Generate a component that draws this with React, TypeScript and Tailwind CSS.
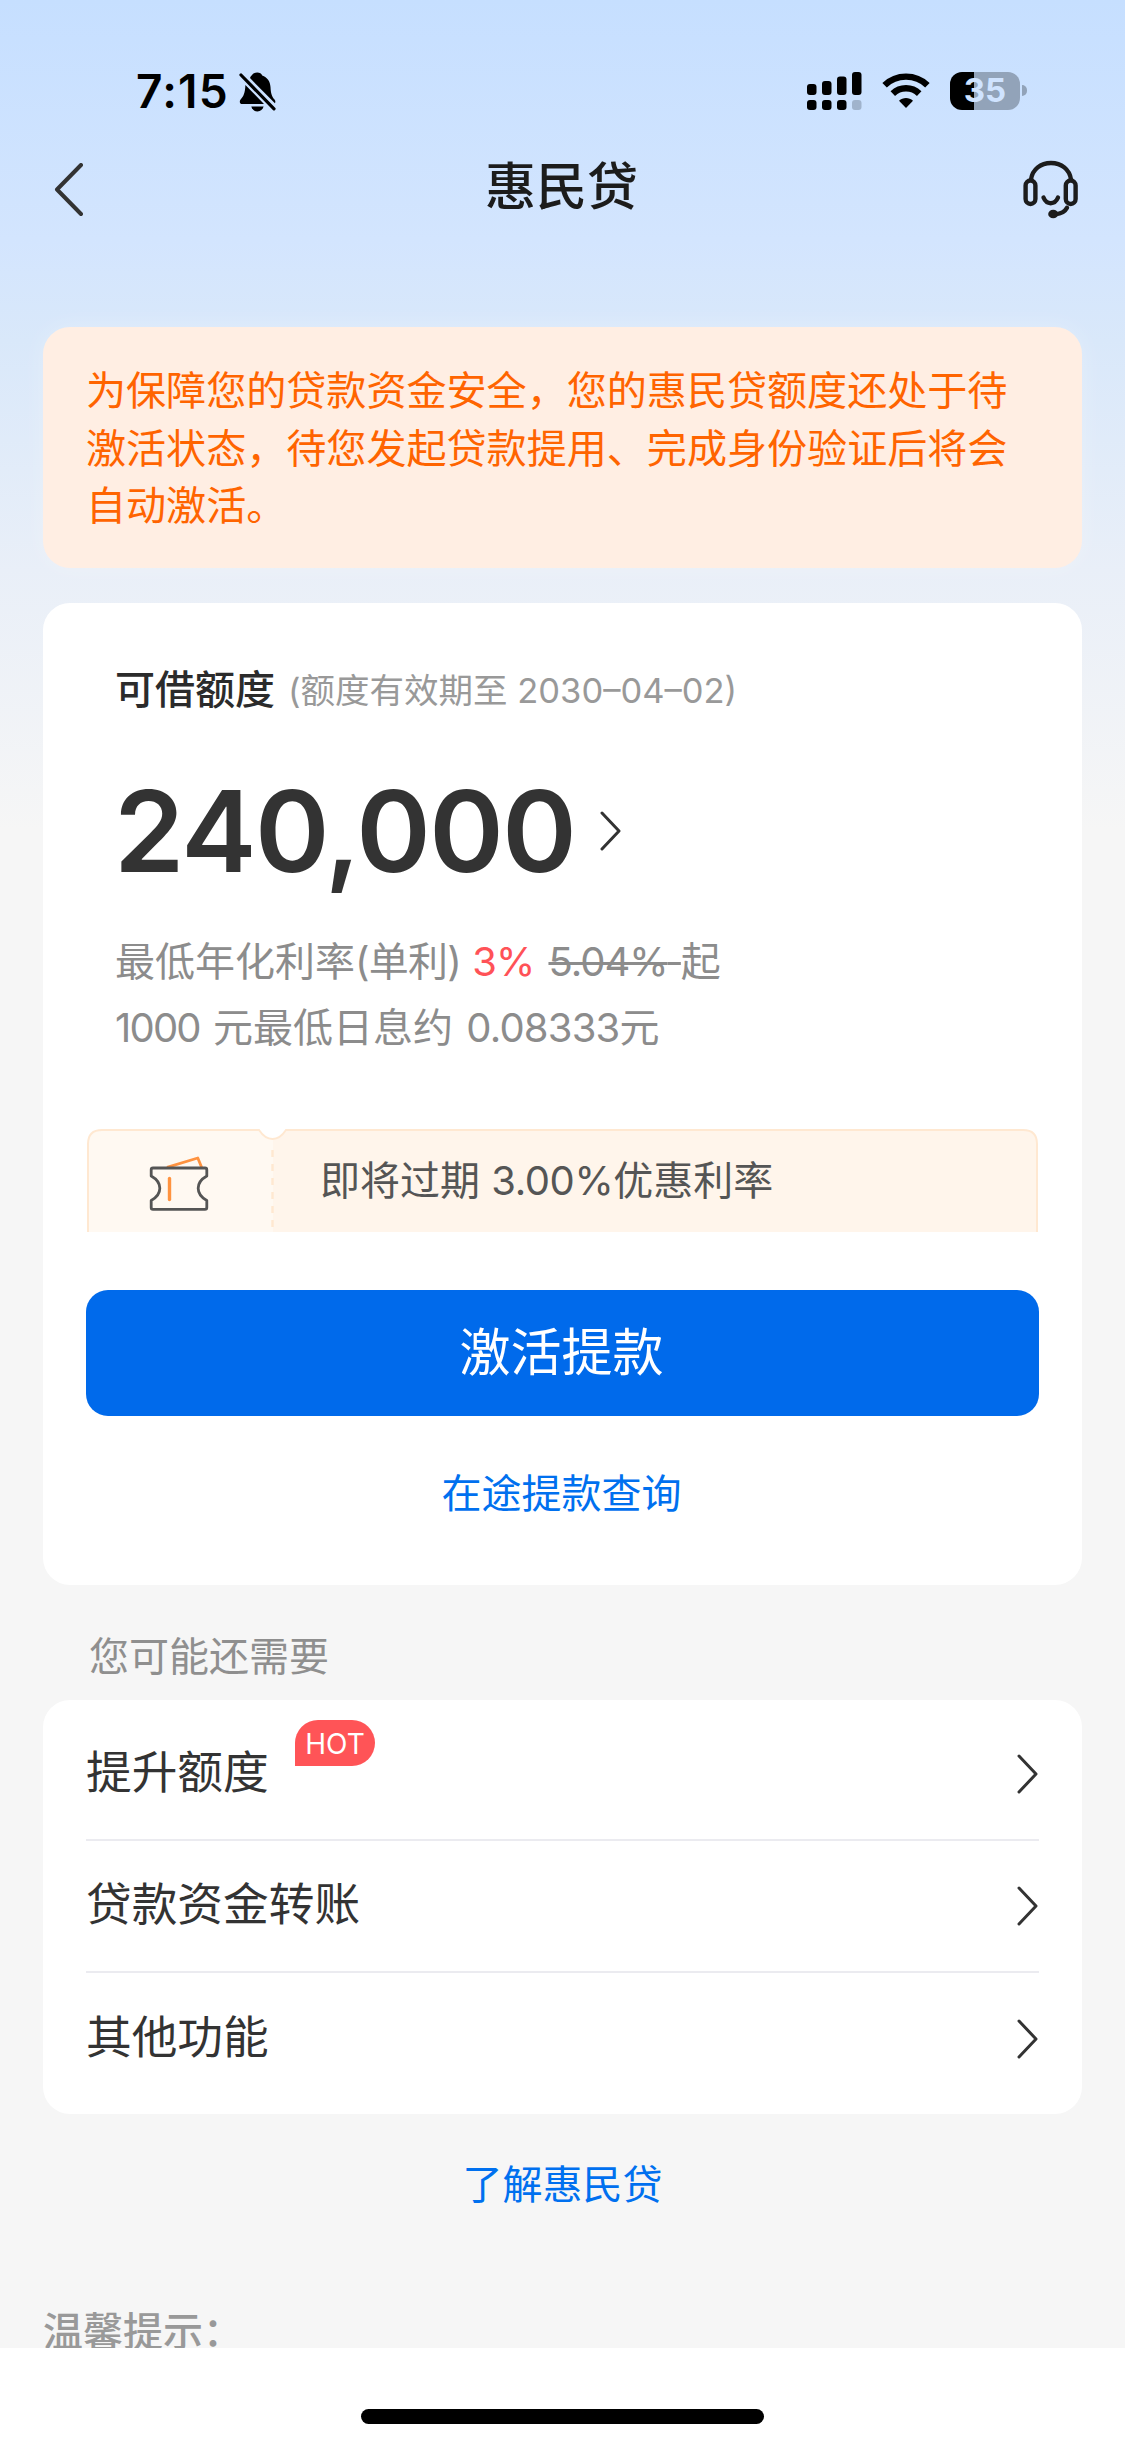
import { clsx } from 'clsx';

interface MenuItem {
  title: string;
  hot?: boolean;
}

const MENU: MenuItem[] = [
  { title: '提升额度', hot: true },
  { title: '贷款资金转账' },
  { title: '其他功能' }
];

const SIGNAL_BARS = [
  { x: 0, y: 12, h: 11 },
  { x: 15, y: 9, h: 14 },
  { x: 30, y: 4.5, h: 18.5 },
  { x: 45, y: 0, h: 23 }
];

function BellOffIcon() {
  return (
    <svg width="38" height="40" viewBox="0 0 38 40" className="block">
      <path
        d="M12.600 3.600C13.800 1.600 15.700.4 18.200.4s4.400 1.200 5 3.200c5 1.700 8 6 8.300 11.400.3 6.400 1.400 9.400 4 12.600.9 1.100 1.200 2.400.4 3.600L11 6.100c.4-1 .8-1.900 1.600-2.500z"
        fill="#000"
      />
      <path
        d="M6.400 13 25 32H3.400C.7 32 .1 29.400 1.600 27.600c2.900-3.300 4.500-6.600 4.800-14.600z"
        fill="#000"
      />
      <path d="M12.300 34.600h12.300c-.8 3-3 4.900-6.100 4.900s-5.400-1.900-6.200-4.900z" fill="#000" />
      <path d="M2 3 35 36.800" stroke="#000" strokeWidth="3.200" strokeLinecap="round" />
    </svg>
  );
}

function SignalIcon() {
  return (
    <svg width="55" height="38" viewBox="0 0 55 38" className="block">
      {SIGNAL_BARS.map((bar) => (
        <rect key={bar.x} x={bar.x} y={bar.y} width="9.500" height={bar.h} rx="3" fill="#000" />
      ))}
      {SIGNAL_BARS.map((bar, index) => (
        <rect
          key={bar.x}
          x={bar.x}
          y="28"
          width="9.500"
          height="10"
          rx="3"
          fill={index === 3 ? '#a0b3cc' : '#000'}
        />
      ))}
    </svg>
  );
}

function WifiIcon() {
  return (
    <svg width="48" height="36" viewBox="0 0 48 36" className="block">
      <g fill="none" stroke="#000" strokeWidth="6.400">
        <path d="M2.600 12.200C14.400.700 33.600.700 45.400 12.200" />
        <path d="M10.800 20.600c7.300-7.200 19.100-7.200 26.400 0" />
      </g>
      <path d="M24 35l-7-7.200c3.900-3.800 10.100-3.800 14 0z" fill="#000" />
    </svg>
  );
}

function HeadsetIcon() {
  return (
    <svg width="58" height="60" viewBox="0 0 58 60" className="block">
      <g fill="none" stroke="#1c1c1c" strokeWidth="4.400" strokeLinecap="round">
        <path d="M9 19.500C10.500 9.200 18.700 3 29 3s18.500 6.200 20 16.500" />
        <rect x="3.600" y="20.500" width="9.800" height="23.500" rx="4.900" />
        <rect x="43.800" y="20.500" width="9.800" height="23.500" rx="4.900" />
        <path d="M21.500 37.500c1.500 3.600 3.900 5.700 7.200 5.700s5.800-2.100 7.300-5.700" />
        <path d="M45 47.800c-2.200 4.200-6 6-11.500 6.500" />
      </g>
      <ellipse cx="31.200" cy="54" rx="5" ry="4.300" fill="#1c1c1c" />
    </svg>
  );
}

function TicketIcon() {
  return (
    <svg width="60" height="58" viewBox="0 0 60 58" className="block">
      <path d="M18 12.300 48.800 3l3.800 9.300" fill="none" stroke="#ff9340" strokeWidth="2.800" strokeLinejoin="round" />
      <path
        d="M4 13h52c1.200 0 1.800.6 1.800 1.800V21c-11.500 6.500-11.500 18 0 24.500v7c0 1.200-.6 1.800-1.800 1.800H4c-1.200 0-1.800-.6-1.800-1.800v-7c11.500-6.500 11.500-18 0-24.500v-6.200C2.200 13.600 2.800 13 4 13z"
        fill="none"
        stroke="#555"
        strokeWidth="2.800"
        strokeLinejoin="round"
      />
      <path d="M20.500 23.500v21" stroke="#ff9340" strokeWidth="3.400" strokeLinecap="round" />
    </svg>
  );
}

function Chevron({ className }: { className?: string }) {
  return (
    <svg width="22" height="40" viewBox="0 0 22 40" className={clsx('block', className)}>
      <path d="M2 2 19 20 2 38" fill="none" stroke="#333" strokeWidth="3" strokeLinecap="round" strokeLinejoin="round" />
    </svg>
  );
}

function StatusBar() {
  return (
    <div className="flex h-[140px] items-start pt-[72px] pl-[136px]">
      <span className="mt-[-4px] w-[103px] text-[46px] leading-[46px] font-semibold tracking-[1.200px] text-black">7:15</span>
      <BellOffIcon />
      <div className="ml-auto flex pr-[98px]">
        <SignalIcon />
        <div className="mt-px ml-[20px]">
          <WifiIcon />
        </div>
        <div className="ml-[20px] flex h-[38px] w-[70px] items-center justify-center rounded-[12px] bg-linear-to-r from-black from-35% to-[#92a3b9] to-35% text-[33px] font-bold text-[#cfe3ff]">
          35
        </div>
        <div className="mt-[13px] ml-[2px] h-[11px] w-[5px] rounded-r-full bg-[#92a3b9]" />
      </div>
    </div>
  );
}

function NavBar() {
  return (
    <div className="flex h-[100px] items-center justify-between pr-[45px] pl-[54px]">
      <svg width="58" height="54" viewBox="0 0 58 54" className="block">
        <path d="M27 2 3 26.500l24 24.500" fill="none" stroke="#333" strokeWidth="4" strokeLinecap="round" strokeLinejoin="round" />
      </svg>
      <h1 className="mt-[-6px] mr-[11px] text-[51px] font-medium text-[#1c1c1c]">惠民贷</h1>
      <HeadsetIcon />
    </div>
  );
}

function Coupon() {
  return (
    <div className="relative flex h-[103px] overflow-hidden">
      <svg width="953" height="103" viewBox="0 0 953 103" className="absolute inset-0">
        <path d="M2 104V15Q2 1 16 1H173C177 7 181 10 186.500 10V104z" fill="#fff9f2" />
        <path d="M186.500 10C192 10 196 7 200 1H937Q951 1 951 15V104H186.500z" fill="#fff5eb" />
        <path
          d="M2 105V15Q2 1 16 1H173C177 7 181 10 186.500 10S196 7 200 1H937Q951 1 951 15V105"
          fill="none"
          stroke="#ffe8d1"
          strokeWidth="2"
        />
        <path d="M186.500 21V102" stroke="#ffe8d1" strokeWidth="2.400" strokeDasharray="7 7" />
      </svg>
      <div className="relative flex w-[186px] justify-center pt-[26px]">
        <TicketIcon />
      </div>
      <div className="relative pt-[23px] pl-[48px] text-[40px] leading-[58px] text-[#555]">
        即将过期 <span className="tracking-[-0.4px]">3.00%</span>优惠利率
      </div>
    </div>
  );
}

function QuotaCard() {
  return (
    <section className="mt-[35px] h-[982px] rounded-[27px] bg-white px-[43px] pt-[55px]">
      <div className="pl-[29px]">
        <div className="flex items-center leading-[60px]">
          <h2 className="text-[40px] font-medium text-[#2b2b2b]">可借额度</h2>
          <span className="mt-[3px] ml-[13px] text-[34.500px] text-[#999]">(额度有效期至 2030–04–02)</span>
        </div>
        <div className="mt-[40px] flex h-[140px] items-center">
          <span className="ml-[-1px] text-[113px] leading-[140px] font-semibold tracking-[-1.500px] text-[#333]">240,000</span>
          <Chevron className="ml-[25px]" />
        </div>
        <div className="mt-[28px] text-[40px] leading-[66px] text-[#8c8c8c]">
          <p>
            最低年化利率<span className="tracking-[-0.800px]">(单利)</span>{' '}
            <span className="mr-[3px] tracking-[-1px] text-[#ff5257]">3%</span>{' '}
            <span className="whitespace-pre line-through decoration-[3px]">
              <span className="tracking-[-1px]">5.04%</span>
              <span className="tracking-[2px]"> </span>
            </span>
            起
          </p>
          <p>
            <span className="mr-[2px] tracking-[-1.800px]">1000</span> 元最低日息约{' '}
            <span className="ml-[2px] tracking-[-0.800px]">0.08333</span>元
          </p>
        </div>
      </div>
      <div className="mt-[68px]">
        <Coupon />
      </div>
      <button className="mt-[58px] block h-[126px] w-full rounded-[22px] bg-[#006aeb] pr-[2px] text-[51px] text-white">
        激活提款
      </button>
      <a className="mt-[48px] block pr-[2px] text-center text-[40px] leading-[60px] text-[#0070ef]">在途提款查询</a>
    </section>
  );
}

export default function App() {
  return (
    <div className="flex h-[2446px] w-[1125px] flex-col overflow-hidden bg-white font-[Inter,'Noto_Sans_CJK_SC',sans-serif]">
      <main className="h-[2348px] overflow-hidden bg-[#f6f6f6] bg-[linear-gradient(180deg,#c6dfff_0px,#d3e5fe_240px,#d9e8fa_340px,#e9eff8_570px,#f6f6f6_830px)]">
        <StatusBar />
        <NavBar />
        <div className="px-[43px] pt-[87px]">
          {/* Activation notice */}
          <section className="h-[241px] rounded-[27px] bg-[#ffeee3] px-[43px] pt-[35px] text-[40.070px] leading-[57.500px] text-[#ff6400] shadow-[0_0_24px_rgba(255,255,255,0.25)]">
            为保障您的贷款资金安全，您的惠民贷额度还处于待激活状态，待您发起贷款提用、完成身份验证后将会自动激活。
          </section>

          <QuotaCard />

          {/* Other services */}
          <h3 className="mt-[42px] pl-[46px] text-[40px] leading-[60px] text-[#8f8f8f]">您可能还需要</h3>
          <ul className="mt-[13px] h-[414px] rounded-[27px] bg-white px-[43px] pt-[9px]">
            {MENU.map((item, index) => (
              <li
                key={item.title}
                className={clsx('flex h-[132px] items-center justify-between', index < 2 && 'border-b-2 border-[#ebebf0]')}
              >
                <div className="relative mt-[-2px] text-[45.700px] text-[#333]">
                  {item.title}
                  {item.hot && (
                    <span className="absolute top-[-19px] left-[209px] flex h-[46px] w-[80px] items-center justify-center rounded-[23px] rounded-bl-none bg-[#ff5457] pt-[2px] text-[28px] text-white">
                      HOT
                    </span>
                  )}
                </div>
                <Chevron />
              </li>
            ))}
          </ul>

          <a className="mt-[41px] block text-center text-[40px] leading-[60px] text-[#0070ef]">了解惠民贷</a>
          <p className="mt-[87px] text-[40px] leading-[60px] font-medium text-[#999]">温馨提示：</p>
        </div>
      </main>
      <footer className="flex h-[98px] justify-center pt-[61px]">
        <div className="h-[15px] w-[403px] rounded-full bg-black" />
      </footer>
    </div>
  );
}
